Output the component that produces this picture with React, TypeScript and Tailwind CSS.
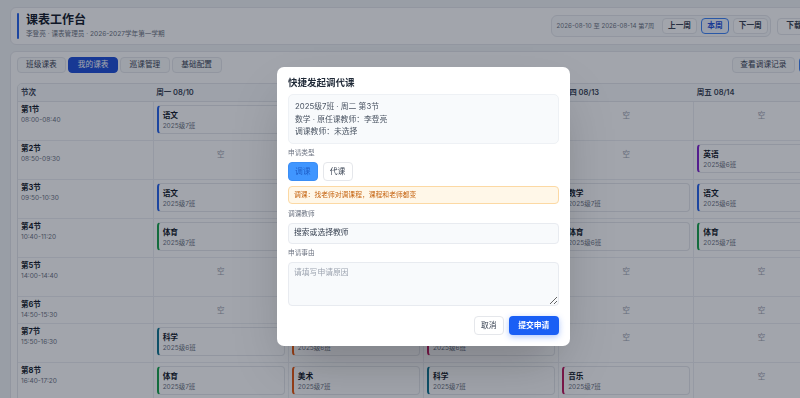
import React from 'react';

type Lesson = { s: string; c: string; bar: string } | null;

const days = ['周一 08/10', '周二 08/11', '周三 08/12', '周四 08/13', '周五 08/14'];

const periods = [
    { n: '第1节', t: '08:00-08:40' },
    { n: '第2节', t: '08:50-09:30' },
    { n: '第3节', t: '09:50-10:30' },
    { n: '第4节', t: '10:40-11:20' },
    { n: '第5节', t: '14:00-14:40' },
    { n: '第6节', t: '14:50-15:30' },
    { n: '第7节', t: '15:50-16:30' },
    { n: '第8节', t: '16:40-17:20' },
];

const BLUE = 'border-l-[#2563eb]';
const GREEN = 'border-l-[#16a34a]';
const TEAL = 'border-l-[#0e7490]';
const PURPLE = 'border-l-[#7e22ce]';
const ORANGE = 'border-l-[#ea580c]';
const PINK = 'border-l-[#be185d]';
const INDIGO = 'border-l-[#4f46e5]';

const L = (s: string, c: string, bar: string): Lesson => ({ s, c, bar });

// rows = periods, cols = Mon..Fri
const grid: Lesson[][] = [
    [L('语文', '2025级7班', BLUE), L('数学', '2025级6班', INDIGO), null, null, null],
    [null, null, L('语文', '2025级6班', BLUE), null, L('英语', '2025级6班', PURPLE)],
    [L('语文', '2025级7班', BLUE), L('数学', '2025级7班', INDIGO), null, L('数学', '2025级7班', INDIGO), L('语文', '2025级6班', BLUE)],
    [L('体育', '2025级7班', GREEN), null, L('英语', '2025级7班', PURPLE), L('体育', '2025级6班', GREEN), L('体育', '2025级7班', GREEN)],
    [null, L('数学', '2025级6班', INDIGO), null, null, null],
    [null, null, null, null, null],
    [L('科学', '2025级6班', TEAL), L('美术', '2025级6班', ORANGE), L('音乐', '2025级6班', PINK), null, null],
    [L('体育', '2025级7班', GREEN), L('美术', '2025级7班', ORANGE), L('科学', '2025级7班', TEAL), L('音乐', '2025级7班', PINK), null],
];

function LessonCell({ lesson, last }: { lesson: Lesson; last: boolean }) {
    return (
        <div className={`px-[3px] pt-[3px] ${lesson ? 'pb-[6px]' : 'pb-0'} border-l border-[#eceef2] ${last ? '' : 'border-b'}`}>
            {lesson ? (
                <div className={`h-[29px] rounded-[4px] border border-[#e5e7eb] border-l-2 ${lesson.bar} bg-white pl-[4px] pt-[4px]`}>
                    <div className="text-[7.7px] leading-[11px] font-bold text-[#111827]">{lesson.s}</div>
                    <div className="text-[6.5px] leading-[11px] text-[#6b7280]">{lesson.c}</div>
                </div>
            ) : (
                <div className="h-[23px] flex items-center justify-center text-[7.5px] text-[#9ca3af]">空</div>
            )}
        </div>
    );
}

export default function App() {
    return (
        <div className="relative w-[800px] h-[398px] overflow-hidden bg-[#f1f3f6] font-[Inter,'Noto_Sans_CJK_SC',sans-serif]">
            <div className="w-[846px] px-[10px] pt-[7px] flex flex-col gap-[5.5px]">
                {/* header */}
                <div className="h-[38px] rounded-[6px] border border-[#e5e7eb] bg-white flex items-center justify-between pl-[6px] pr-[9px]">
                    <div className="flex items-stretch gap-[7px]">
                        <div className="w-[2px] rounded-full bg-[#2563eb]"></div>
                        <div>
                            <div className="text-[12px] leading-[14px] font-bold text-[#111827]">课表工作台</div>
                            <div className="mt-[2.5px] text-[6.6px] leading-[9px] text-[#6b7280]">李登亮 · 课表管理员 · 2026-2027学年第一学期</div>
                        </div>
                    </div>
                    <div className="flex items-center gap-[6px]">
                        <div className="h-[21.5px] rounded-[6px] border border-[#e5e7eb] bg-[#f8fafc] flex items-center pl-[5px] pr-[2.5px]">
                            <span className="text-[6.2px] text-[#6b7280] mr-[7.5px]">2026-08-10 至 2026-08-14 第7周</span>
                            <div className="flex gap-[3.5px]">
                                <button className="h-[16.5px] w-[35.5px] rounded-[4px] border border-[#e5e7eb] bg-white text-[7.7px] font-bold text-[#374151]">上一周</button>
                                <button className="h-[16.5px] w-[28.5px] rounded-[4px] border-[1.5px] border-[#3b82f6] bg-[#eff6ff] text-[7.7px] font-bold text-[#1d4ed8]">本周</button>
                                <button className="h-[16.5px] w-[35px] rounded-[4px] border border-[#e5e7eb] bg-white text-[7.7px] font-bold text-[#374151]">下一周</button>
                            </div>
                        </div>
                        <button className="h-[17px] px-[8px] rounded-[4px] border border-[#e5e7eb] bg-white text-[7.7px] font-bold text-[#374151]">下载课表</button>
                    </div>
                </div>

                {/* main card */}
                <div className="rounded-[6px] border border-[#e5e7eb] bg-white px-[5.5px] pt-[5.5px] pb-[6px]">
                    <div className="flex items-center justify-between">
                        <div className="flex gap-[2px]">
                            {['班级课表', '我的课表', '巡课管理', '基础配置'].map((t, i) => (
                                <button key={t}
                                    className={i === 1
                                        ? 'h-[16px] px-[8.5px] rounded-[4px] border border-[#1d4ed8] bg-[#1d4ed8] text-[7.7px] text-white'
                                        : 'h-[16px] px-[8.5px] rounded-[4px] border border-[#e5e7eb] bg-[#f9fafb] text-[7.7px] text-[#374151]'}>
                                    {t}
                                </button>
                            ))}
                        </div>
                        <div className="flex gap-[4px]">
                            <button className="h-[16px] px-[7.5px] rounded-[4px] border border-[#e5e7eb] bg-[#f9fafb] text-[7.7px] text-[#374151]">查看调课记录</button>
                            <button className="h-[16px] w-[30.5px] rounded-[4px] border border-[#3b82f6] bg-[#3b82f6] text-[7.7px] font-bold text-white">导出</button>
                        </div>
                    </div>

                    <div className="mt-[10px] rounded-[5px] border border-[#e5e7eb] overflow-hidden">
                        <div className="grid grid-cols-6 h-[17.5px] bg-[#f8fafc] border-b border-[#e5e7eb] items-center text-[7.5px] font-semibold text-[#374151]">
                            <div className="pl-[3.5px]">节次</div>
                            {days.map(d => <div key={d} className="pl-[3.5px]">{d}</div>)}
                        </div>
                        {periods.map((p, r) => (
                            <div key={p.n} className="grid grid-cols-6">
                                <div className={`pl-[3.5px] pt-[3px] pb-[2px] border-[#eceef2] ${r === periods.length - 1 ? '' : 'border-b'}`}>
                                    <div className="text-[7.5px] leading-[10px] font-bold text-[#111827]">{p.n}</div>
                                    <div className="text-[6.5px] leading-[11px] text-[#6b7280]">{p.t}</div>
                                </div>
                                {grid[r].map((l, c) => <LessonCell key={c} lesson={l} last={r === periods.length - 1} />)}
                            </div>
                        ))}
                    </div>
                </div>
            </div>

            {/* overlay + dialog */}
            <div className="fixed inset-0 bg-[rgba(15,23,42,0.39)]">
                <div className="absolute left-[277px] top-[67px] w-[293px] rounded-[7px] bg-white px-[11px] pt-[9px] pb-[11px] shadow-2xl">
                    <div className="text-[9.5px] leading-[13px] font-bold text-[#1f2937]">快捷发起调代课</div>
                    <div className="mt-[5px] rounded-[5px] border border-[#eef1f5] bg-[#f8fafc] px-[6px] py-[5px] text-[7.8px] leading-[12.7px] text-[#4b5563]">
                        <div>2025级7班 · 周二 第3节</div>
                        <div>数学 · 原任课教师：李登亮</div>
                        <div>调课教师：未选择</div>
                    </div>

                    <div className="mt-[4px] text-[6.7px] leading-[10px] text-[#6b7280]">申请类型</div>
                    <div className="mt-[4px] flex gap-[5px]">
                        <button className="h-[18.5px] w-[29.5px] rounded-[4px] border border-[#3b8ef5] bg-[#4096ff] text-[7.8px] text-[#1e5fc9]">调课</button>
                        <button className="h-[18.5px] w-[30px] rounded-[4px] border border-[#e5e7eb] bg-white text-[7.8px] text-[#374151]">代课</button>
                    </div>

                    <div className="mt-[5.5px] h-[18px] rounded-[4px] border border-[#fcd9a4] bg-[#fff7e8] px-[5px] flex items-center text-[6.8px] leading-[10px] text-[#c4610c]">
                        调课：找老师对调课程，课程和老师都变
                    </div>

                    <div className="mt-[4.5px] text-[6.7px] leading-[10px] text-[#6b7280]">调课教师</div>
                    <div className="mt-[4px] h-[21px] rounded-[4px] border border-[#e8ebf0] bg-[#f8fafc] px-[5px] flex items-center text-[7.8px] text-[#374151]">
                        搜索或选择教师
                    </div>

                    <div className="mt-[4px] text-[6.7px] leading-[10px] text-[#6b7280]">申请事由</div>
                    <textarea
                        placeholder="请填写申请原因"
                        className="mt-[4px] block w-full h-[44px] rounded-[4px] border border-[#e8ebf0] bg-[#f8fafc] px-[5px] py-[4px] text-[7.8px] leading-[11px] text-[#374151] placeholder:text-[#9ca3af] outline-none"
                    />

                    <div className="mt-[10px] flex justify-end gap-[5px]">
                        <button className="h-[19.5px] w-[29.5px] rounded-[4px] border border-[#e5e7eb] bg-white text-[7.8px] text-[#374151]">取消</button>
                        <button className="h-[19.5px] w-[50.5px] rounded-[4px] bg-[#1a5ff5] text-[7.8px] font-bold text-white shadow-[0_2px_6px_rgba(26,95,245,0.35)]">提交申请</button>
                    </div>
                </div>
            </div>
        </div>
    );
}
